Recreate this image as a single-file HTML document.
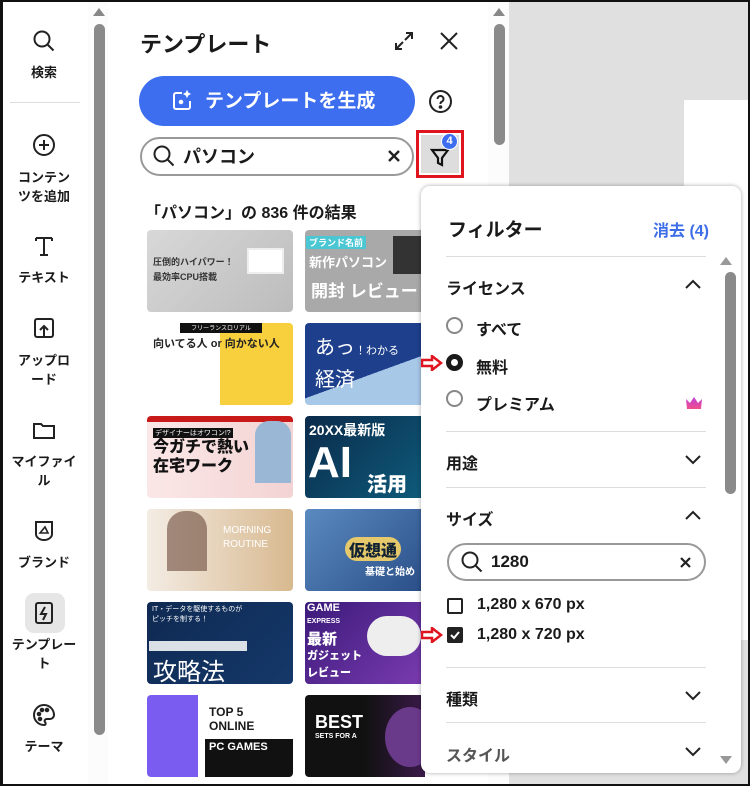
<!DOCTYPE html>
<html><head><meta charset="utf-8">
<style>
*{box-sizing:border-box;margin:0;padding:0}
body{width:750px;height:786px;overflow:hidden;position:relative;background:#fff;font-family:"Liberation Sans","Noto Sans CJK JP",sans-serif;color:#1a1a1a}
.abs{position:absolute}
.frame{position:absolute;left:0;top:0;width:750px;height:786px;border:2px solid #111;border-left-width:3px;pointer-events:none;z-index:50}
.side{left:0;top:0;width:88px;height:786px;background:#fff}
.si{position:absolute;left:0;width:88px;text-align:center;font-size:13px;font-weight:700;line-height:19px}
.si svg{display:block;margin:0 auto 9px}
.thumb{position:absolute;width:146px;height:82px;border-radius:4px;overflow:hidden}
.t2{width:120px;border-radius:4px 0 0 4px}
.pop{left:421px;top:186px;width:320px;height:587px;background:#fff;border-radius:9px;box-shadow:0 0 4px rgba(0,0,0,.35);z-index:10}
.hr{position:absolute;left:25px;width:260px;height:1px;background:#ddd}
.lbl{position:absolute;left:25px;font-size:16px;font-weight:700}
.chev{position:absolute;left:262px}
.rad{position:absolute;left:25px;width:17px;height:17px;border:2px solid #888;border-radius:50%}
</style></head><body>
<div class="frame"></div>
<!-- sidebar -->
<div class="abs side">
 <div class="si" style="top:28px"><svg width="26" height="26" viewBox="0 0 26 26" fill="none" stroke="#222" stroke-width="2"><circle cx="11" cy="11" r="7.5"/><path d="M16.5 16.5l6 6"/></svg>検索</div>
 <div class="abs" style="left:10px;top:102px;width:70px;height:1px;background:#ddd"></div>
 <div class="si" style="top:133px"><svg width="26" height="26" viewBox="0 0 26 26" fill="none" stroke="#222" stroke-width="2"><circle cx="13" cy="12" r="10"/><path d="M13 7v10M8 12h10"/></svg>コンテン<br>ツを追加</div>
 <div class="si" style="top:233px"><svg width="26" height="26" viewBox="0 0 26 26" fill="none" stroke="#222" stroke-width="2"><path d="M5 5h16M13 5v17M9 22h8M5 5v3M21 5v3"/></svg>テキスト</div>
 <div class="si" style="top:316px"><svg width="26" height="26" viewBox="0 0 26 26" fill="none" stroke="#222" stroke-width="2"><rect x="4" y="3" width="18" height="18" rx="2"/><path d="M13 22V10M9 14l4-4 4 4"/></svg>アップロ<br>ード</div>
 <div class="si" style="top:417px"><svg width="26" height="26" viewBox="0 0 26 26" fill="none" stroke="#222" stroke-width="2"><path d="M3 7h7l2 2h11v12H3z"/></svg>マイファイ<br>ル</div>
 <div class="si" style="top:518px"><svg width="26" height="26" viewBox="0 0 26 26" fill="none" stroke="#222" stroke-width="2"><path d="M5 4h16v12a8 6 0 0 1-16 0z"/><path d="M9 15l5-6 3 6z" stroke-width="1.6"/></svg>ブランド</div>
 <div class="abs" style="left:25px;top:593px;width:40px;height:40px;background:#e6e6e6;border-radius:9px"></div>
 <div class="si" style="top:600px"><svg width="26" height="26" viewBox="0 0 26 26" fill="none" stroke="#222" stroke-width="2"><rect x="5" y="3" width="16" height="20" rx="2"/><path d="M14 7l-4 7h5l-3 6"/></svg><span style="display:block;margin-top:8px">テンプレー<br>ト</span></div>
 <div class="si" style="top:702px"><svg width="26" height="26" viewBox="0 0 26 26" fill="none" stroke="#222" stroke-width="2"><path d="M13 3a10 10 0 1 0 0 20c2 0 2-2 1-3s0-3 2-3h3a4 4 0 0 0 4-4c0-5-4-10-10-10z"/><circle cx="8" cy="12" r="1.3" fill="#222"/><circle cx="11" cy="8" r="1.3" fill="#222"/><circle cx="16" cy="8" r="1.3" fill="#222"/><circle cx="9" cy="17" r="1.3" fill="#222"/></svg>テーマ</div>
</div>
<!-- sidebar scrollbar -->
<div class="abs" style="left:88px;top:0;width:20px;height:786px;background:#fcfcfc"></div>
<div class="abs" style="left:93px;top:8px;width:0;height:0;border-left:6px solid transparent;border-right:6px solid transparent;border-bottom:8px solid #888"></div>
<div class="abs" style="left:94px;top:24px;width:11px;height:711px;background:#8a8a8a;border-radius:6px"></div>
<!-- main panel -->
<div class="abs" style="left:140px;top:27px;font-size:22px;font-weight:700">テンプレート</div>
<svg class="abs" style="left:392px;top:29px" width="24" height="24" viewBox="0 0 24 24" fill="none" stroke="#222" stroke-width="2"><path d="M14 4h6v6M20 4l-7 7M10 20H4v-6M4 20l7-7"/></svg>
<svg class="abs" style="left:438px;top:30px" width="22" height="22" viewBox="0 0 22 22" stroke="#222" stroke-width="2"><path d="M3 3l16 16M19 3L3 19"/></svg>
<div class="abs" style="left:139px;top:76px;width:276px;height:50px;background:#3d6ef0;border-radius:25px;color:#fff;font-size:19px;font-weight:700;line-height:52px;padding-left:66px">テンプレートを生成</div>
<svg class="abs" style="left:170px;top:89px" width="24" height="24" viewBox="0 0 24 24" fill="none" stroke="#fff" stroke-width="2"><path d="M12 4H6a2 2 0 0 0-2 2v12a2 2 0 0 0 2 2h12a2 2 0 0 0 2-2v-6"/><path d="M17 2l1 2 2 1-2 1-1 2-1-2-2-1 2-1z" fill="#fff" stroke-width="1"/><circle cx="11" cy="13" r="1.3" fill="#fff"/></svg>
<svg class="abs" style="left:428px;top:89px" width="25" height="25" viewBox="0 0 25 25" fill="none" stroke="#222" stroke-width="2"><circle cx="12.5" cy="12.5" r="10.5"/><path d="M9.5 10a3 3 0 1 1 4 2.8c-1 .4-1 1-1 2.2"/><circle cx="12.5" cy="18" r=".8" fill="#222"/></svg>
<div class="abs" style="left:140px;top:137px;width:274px;height:39px;border:2px solid #999;border-radius:20px"></div>
<svg class="abs" style="left:151px;top:143px" width="26" height="26" viewBox="0 0 26 26" fill="none" stroke="#222" stroke-width="2"><circle cx="11" cy="11" r="7.5"/><path d="M16.5 16.5l6 6"/></svg>
<div class="abs" style="left:183px;top:143px;font-size:18px;font-weight:700">パソコン</div>
<svg class="abs" style="left:388px;top:150px" width="12" height="12" viewBox="0 0 12 12" stroke="#222" stroke-width="2.4"><path d="M1 1l10 10M11 1L1 11"/></svg>
<div class="abs" style="left:416px;top:130px;width:48px;height:48px;border:3px solid #e0141e"></div>
<div class="abs" style="left:421px;top:135px;width:38px;height:38px;background:#ddd"></div>
<svg class="abs" style="left:427px;top:142px" width="26" height="28" viewBox="0 0 26 28" fill="none" stroke="#111" stroke-width="2.2"><path d="M5 8h16l-6 8v7l-4-2v-5z"/></svg>
<div class="abs" style="left:441px;top:133px;width:17px;height:17px;background:#3d6ef0;border-radius:50%;border:1.5px solid #fff;color:#fff;font-size:11px;font-weight:700;text-align:center;line-height:14px">4</div>
<div class="abs" style="left:145px;top:199px;font-size:16px;font-weight:700">「パソコン」の 836 件の結果</div>
<!-- thumbnails -->
<div class="thumb" style="left:147px;top:230px;background:linear-gradient(135deg,#d8d8d8,#bcbcbc)"><div class="abs" style="left:6px;top:25px;font-size:9px;font-weight:700;color:#333;line-height:15px">圧倒的ハイパワー！<br>最効率CPU搭載</div><div class="abs" style="left:100px;top:18px;width:37px;height:26px;border:2px solid #eee;background:#fff"></div></div>
<div class="thumb t2" style="left:305px;top:230px;background:#a9a9a9"><div class="abs" style="left:1px;top:6px;background:#4bc7d3;color:#fff;font-size:9px;font-weight:700;padding:0 3px">ブランド名前</div><div class="abs" style="left:4px;top:22px;color:#fff;font-size:13px;font-weight:700">新作パソコン</div><div class="abs" style="left:6px;top:47px;color:#fff;font-size:17px;font-weight:700">開封 レビュー</div><div class="abs" style="left:88px;top:6px;width:32px;height:38px;background:#333"></div></div>
<div class="thumb" style="left:147px;top:323px;background:linear-gradient(90deg,#fff 50%,#f8cf3c 50%)"><div class="abs" style="left:33px;top:0;width:82px;height:10px;background:#111;color:#fff;font-size:6px;text-align:center">フリーランスロリアル</div><div class="abs" style="left:6px;top:12px;font-size:11px;font-weight:700;color:#222">向いてる人 or 向かない人</div></div>
<div class="thumb t2" style="left:305px;top:323px;background:linear-gradient(160deg,#1e3f8c 60%,#a8c8e8 60%)"><div class="abs" style="left:10px;top:8px;color:#fff;font-size:20px">あっ<span style="font-size:11px">！わかる</span></div><div class="abs" style="left:10px;top:40px;color:#fff;font-size:20px">経済</div></div>
<div class="thumb" style="left:147px;top:416px;background:linear-gradient(90deg,#fbe7e7,#f3d3d3)"><div class="abs" style="left:0;top:0;width:146px;height:6px;background:#c91a1a"></div><div class="abs" style="left:6px;top:12px;background:#111;color:#fff;font-size:7px;padding:0 2px">デザイナーはオワコン!?</div><div class="abs" style="left:6px;top:22px;font-size:16px;font-weight:900;line-height:19px;color:#111">今ガチで熱い<br>在宅ワーク</div><div class="abs" style="left:108px;top:5px;width:36px;height:62px;background:#9bb7d6;border-radius:14px 14px 0 0"></div></div>
<div class="thumb t2" style="left:305px;top:416px;background:linear-gradient(135deg,#0b2a4a,#0e5b7b)"><div class="abs" style="left:4px;top:4px;color:#fff;font-size:14px;font-weight:700">20XX最新版</div><div class="abs" style="left:3px;top:22px;color:#fff;font-size:44px;font-weight:900;line-height:50px">AI</div><div class="abs" style="left:62px;top:52px;color:#fff;font-size:20px;font-weight:900">活用</div></div>
<div class="thumb" style="left:147px;top:509px;background:linear-gradient(90deg,#f3ece4,#d8b98f)"><div class="abs" style="left:76px;top:15px;color:#fff;font-size:10px;line-height:14px">MORNING<br>ROUTINE</div><div class="abs" style="left:20px;top:2px;width:40px;height:60px;background:#6b4a3a;border-radius:18px 18px 0 0;opacity:.6"></div></div>
<div class="thumb t2" style="left:305px;top:509px;background:linear-gradient(135deg,#5a8ac0,#2a4e88)"><div class="abs" style="left:40px;top:28px;color:#123;font-size:16px;font-weight:900;background:#e6c96a;border-radius:12px;padding:0 4px">仮想通</div><div class="abs" style="left:60px;top:54px;color:#fff;font-size:10px;font-weight:700">基礎と始め</div></div>
<div class="thumb" style="left:147px;top:602px;background:linear-gradient(135deg,#0f2a52,#14386a)"><div class="abs" style="left:5px;top:3px;color:#fff;font-size:7px;line-height:10px">IT・データを駆使するものが<br>ピッチを制する！</div><div class="abs" style="left:2px;top:39px;width:98px;height:10px;background:#fff;opacity:.85"></div><div class="abs" style="left:6px;top:50px;color:#fff;font-size:24px">攻略法</div></div>
<div class="thumb t2" style="left:305px;top:602px;background:linear-gradient(135deg,#3b1a7a,#7a3bb0)"><div class="abs" style="left:2px;top:0;color:#fff;font-size:11px;font-weight:900;line-height:12px">GAME<br><span style="font-size:7px">EXPRESS</span></div><div class="abs" style="left:2px;top:30px;color:#fff;font-size:15px;font-weight:900;line-height:15px">最新<br><span style="font-size:11px">ガジェット<br>レビュー</span></div><div class="abs" style="left:62px;top:14px;width:54px;height:40px;background:#eee;border-radius:20px"></div></div>
<div class="thumb" style="left:147px;top:695px;background:linear-gradient(90deg,#7a5cf0 35%,#fff 35%)"><div class="abs" style="left:58px;top:44px;width:88px;height:38px;background:#111"></div><div class="abs" style="left:62px;top:10px;font-size:12px;font-weight:900;line-height:14px">TOP 5<br>ONLINE</div><div class="abs" style="left:62px;top:46px;color:#fff;font-size:11px;font-weight:900">PC GAMES</div></div>
<div class="thumb t2" style="left:305px;top:695px;background:linear-gradient(90deg,#111 50%,#3a1a4a)"><div class="abs" style="left:10px;top:17px;color:#fff;font-size:18px;font-weight:900">BEST</div><div class="abs" style="left:10px;top:38px;color:#fff;font-size:7px;font-weight:700">SETS FOR A</div><div class="abs" style="left:80px;top:12px;width:50px;height:60px;border-radius:50%;background:#6a3a8a"></div></div>
<!-- main scrollbar -->
<div class="abs" style="left:488px;top:0;width:22px;height:786px;background:#fcfcfc"></div>
<div class="abs" style="left:493px;top:8px;width:0;height:0;border-left:6px solid transparent;border-right:6px solid transparent;border-bottom:8px solid #888"></div>
<div class="abs" style="left:494px;top:24px;width:11px;height:121px;background:#8a8a8a;border-radius:6px"></div>
<!-- right canvas -->
<div class="abs" style="left:509px;top:0;width:241px;height:100px;background:#e0e0e0"></div>
<div class="abs" style="left:509px;top:100px;width:175px;height:686px;background:#e0e0e0"></div>
<div class="abs" style="left:684px;top:100px;width:66px;height:540px;background:#fff"></div>
<div class="abs" style="left:684px;top:640px;width:66px;height:146px;background:#e0e0e0"></div>
<!-- popup -->
<div class="abs pop">
 <div class="abs" style="left:27px;top:29px;font-size:19px;font-weight:700">フィルター</div>
 <div class="abs" style="left:232px;top:31px;font-size:16px;font-weight:700;color:#3d6ee8">消去 (4)</div>
 <div class="hr" style="top:70px"></div>
 <div class="lbl" style="top:89px">ライセンス</div>
 <svg class="chev" style="top:91px" width="20" height="14" viewBox="0 0 20 14" fill="none" stroke="#222" stroke-width="2"><path d="M3 11l7-7 7 7"/></svg>
 <div class="rad" style="top:131px"></div>
 <div class="abs" style="left:55px;top:130px;font-size:16px;font-weight:700">すべて</div>
 <div class="rad" style="top:168px;border:5px solid #1a1a1a"></div>
 <div class="abs" style="left:55px;top:168px;font-size:16px;font-weight:700">無料</div>
 <div class="rad" style="top:204px"></div>
 <div class="abs" style="left:55px;top:205px;font-size:16px;font-weight:700">プレミアム</div>
 <svg class="abs" style="left:264px;top:210px" width="18" height="14" viewBox="0 0 18 14"><defs><linearGradient id="g" x1="0" y1="0" x2="0" y2="1"><stop offset="0" stop-color="#c03fd8"/><stop offset="1" stop-color="#f0508a"/></linearGradient></defs><path d="M1 3l4 4 4-6 4 6 4-4-1 10H2z" fill="url(#g)"/></svg>
 <div class="hr" style="top:245px"></div>
 <div class="lbl" style="top:264px">用途</div>
 <svg class="chev" style="top:267px" width="20" height="14" viewBox="0 0 20 14" fill="none" stroke="#222" stroke-width="2"><path d="M3 3l7 7 7-7"/></svg>
 <div class="hr" style="top:301px"></div>
 <div class="lbl" style="top:320px">サイズ</div>
 <svg class="chev" style="top:322px" width="20" height="14" viewBox="0 0 20 14" fill="none" stroke="#222" stroke-width="2"><path d="M3 11l7-7 7 7"/></svg>
 <div class="abs" style="left:26px;top:357px;width:259px;height:38px;border:2px solid #999;border-radius:19px"></div>
 <svg class="abs" style="left:38px;top:363px" width="26" height="26" viewBox="0 0 26 26" fill="none" stroke="#222" stroke-width="2"><circle cx="11" cy="11" r="7.5"/><path d="M16.5 16.5l6 6"/></svg>
 <div class="abs" style="left:70px;top:366px;font-size:17px;font-weight:700">1280</div>
 <svg class="abs" style="left:259px;top:371px" width="11" height="11" viewBox="0 0 11 11" stroke="#222" stroke-width="2.2"><path d="M1 1l9 9M10 1L1 10"/></svg>
 <div class="abs" style="left:26px;top:412px;width:16px;height:16px;border:2px solid #222;border-radius:2px"></div>
 <div class="abs" style="left:56px;top:410px;font-size:16px;font-weight:700">1,280 x 670 px</div>
 <div class="abs" style="left:26px;top:441px;width:16px;height:16px;background:#222;border-radius:2px"></div>
 <svg class="abs" style="left:28px;top:443px" width="12" height="12" viewBox="0 0 12 12" fill="none" stroke="#fff" stroke-width="2"><path d="M2 6l3 3 5-6"/></svg>
 <div class="abs" style="left:56px;top:440px;font-size:16px;font-weight:700">1,280 x 720 px</div>
 <div class="hr" style="top:481px"></div>
 <div class="lbl" style="top:500px">種類</div>
 <svg class="chev" style="top:503px" width="20" height="14" viewBox="0 0 20 14" fill="none" stroke="#222" stroke-width="2"><path d="M3 3l7 7 7-7"/></svg>
 <div class="hr" style="top:536px"></div>
 <div class="lbl" style="top:556px;color:#555">スタイル</div>
 <svg class="chev" style="top:559px" width="20" height="14" viewBox="0 0 20 14" fill="none" stroke="#222" stroke-width="2"><path d="M3 3l7 7 7-7"/></svg>
 <div class="abs" style="left:299px;top:71px;width:0;height:0;border-left:6px solid transparent;border-right:6px solid transparent;border-bottom:8px solid #999"></div>
 <div class="abs" style="left:304px;top:86px;width:11px;height:222px;background:#8a8a8a;border-radius:6px"></div>
 <div class="abs" style="left:299px;top:570px;width:0;height:0;border-left:6px solid transparent;border-right:6px solid transparent;border-top:8px solid #999"></div>
</div>
<!-- red arrows -->
<svg class="abs" style="left:421px;top:355px;z-index:20" width="22" height="16" viewBox="0 0 22 16"><path d="M1 5h10V1l9 7-9 7v-4H1z" fill="#fff" stroke="#e0141e" stroke-width="2.5"/></svg>
<svg class="abs" style="left:421px;top:627px;z-index:20" width="22" height="16" viewBox="0 0 22 16"><path d="M1 5h10V1l9 7-9 7v-4H1z" fill="#fff" stroke="#e0141e" stroke-width="2.5"/></svg>
</body></html>
